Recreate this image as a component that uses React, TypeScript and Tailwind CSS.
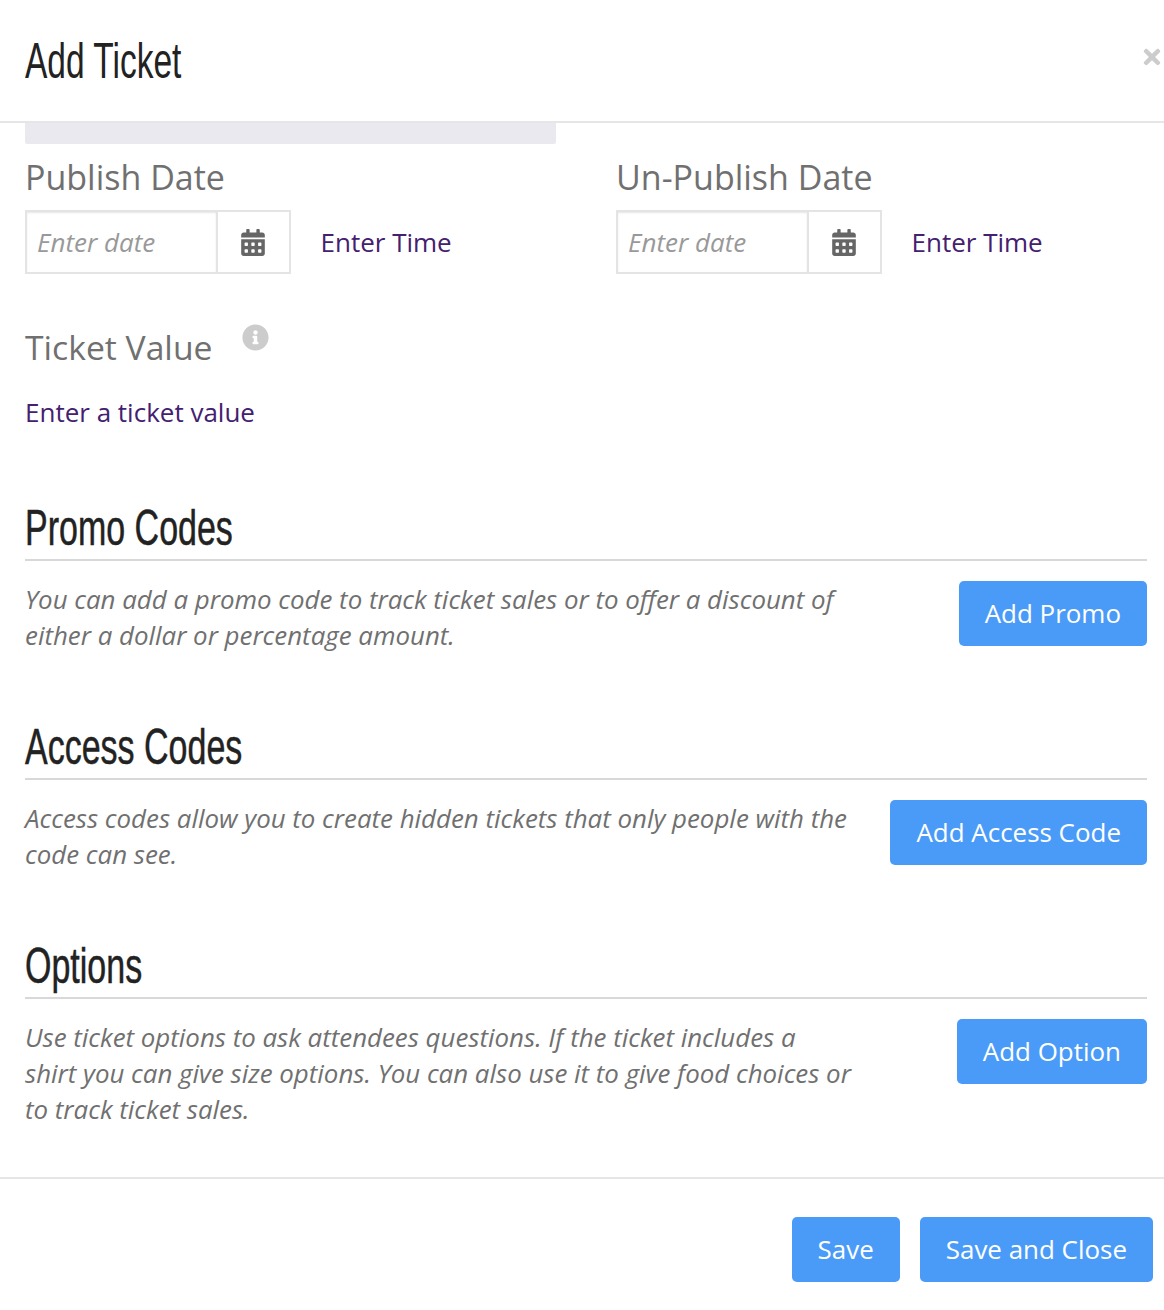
import { FaCalendarAlt, FaInfoCircle, FaTimes } from "react-icons/fa";

const body = "font-['Open_Sans',sans-serif]";
const heading = "font-['Liberation_Sans',sans-serif]";
const blueButton =
  "h-[65px] shrink-0 rounded-[5px] bg-[#4a9bf8] px-[26px] text-[25.95px] text-white";

function DateField({ label }: { label: string }) {
  return (
    <div className="w-[591px] shrink-0">
      <div className="text-[34px] leading-[45px] text-[#707070]">{label}</div>
      <div className="mt-[10px] flex items-center">
        <div className="flex h-[64px] border-2 border-[#e4e4e4]">
          <div className="flex w-[189px] items-center pl-[10px] text-[26px] italic text-[#999999] shadow-[inset_0_1px_2px_rgba(0,0,0,0.1)]">
            Enter date
          </div>
          <div className="flex w-[73px] items-center justify-center border-l-2 border-[#e4e4e4]">
            <FaCalendarAlt className="mr-[2px] h-[27px] w-[24px] text-[#666666]" />
          </div>
        </div>
        <span className="ml-[29.5px] text-[26px] text-[#44206f]">Enter Time</span>
      </div>
    </div>
  );
}

function CodeSection({
  title,
  lines,
  action,
  mt,
}: {
  title: string;
  lines: string[];
  action: string;
  mt: string;
}) {
  return (
    <section className={mt}>
      <h2
        className={`${heading} border-b-2 border-[#d8d8d8] pb-[2px] text-[50px] leading-[58px] text-[#222222]`}
      >
        <span className="inline-block origin-left scale-x-[0.68] [-webkit-text-stroke:0.5px_#222222]">
          {title}
        </span>
      </h2>
      <div className="mt-[20px] flex items-start justify-between">
        <p className="text-[25.86px] leading-[36px] italic text-[#707070]">
          {lines.map((line) => (
            <span key={line} className="block">
              {line}
            </span>
          ))}
        </p>
        <button className={blueButton}>{action}</button>
      </div>
    </section>
  );
}

export default function App() {
  return (
    <div className={`${body} h-[1310px] w-[1164px] overflow-hidden bg-white`}>
      <header className="flex h-[123px] items-center justify-between border-b-2 border-[#e6e6e6] pl-[25px]">
        <h1 className={`${heading} text-[50px] leading-[60px] text-[#222222]`}>
          <span className="inline-block origin-left scale-x-[0.67]">Add Ticket</span>
        </h1>
        <FaTimes className="mt-[-8px] mr-0 h-[24px] w-[24px] text-[#cccccc]" />
      </header>

      <main className="px-[25px] pr-[17px]">
        <div className="h-[21px] w-[531px] rounded-b-[2px] bg-[#ebe9f0]" />

        <div className="mt-[11px] flex">
          <DateField label="Publish Date" />
          <DateField label="Un-Publish Date" />
        </div>

        <div className="mt-[51px] flex items-start">
          <span className="text-[33.7px] leading-[45px] text-[#707070]">Ticket Value</span>
          <FaInfoCircle className="mt-[-1px] ml-[30px] h-[27px] w-[27px] text-[#cccccc]" />
        </div>
        <div className="mt-[24px] text-[26px] leading-[36px] text-[#44206f]">
          Enter a ticket value
        </div>

        <CodeSection
          mt="mt-[69px]"
          title="Promo Codes"
          lines={[
            "You can add a promo code to track ticket sales or to offer a discount of",
            "either a dollar or percentage amount.",
          ]}
          action="Add Promo"
        />
        <CodeSection
          mt="mt-[65px]"
          title="Access Codes"
          lines={[
            "Access codes allow you to create hidden tickets that only people with the",
            "code can see.",
          ]}
          action="Add Access Code"
        />
        <CodeSection
          mt="mt-[65px]"
          title="Options"
          lines={[
            "Use ticket options to ask attendees questions. If the ticket includes a",
            "shirt you can give size options. You can also use it to give food choices or",
            "to track ticket sales.",
          ]}
          action="Add Option"
        />
      </main>

      <footer className="mt-[50px] flex justify-end gap-[20px] border-t-2 border-[#e6e6e6] pt-[38px] pr-[11px]">
        <button className={blueButton}>Save</button>
        <button className={blueButton}>Save and Close</button>
      </footer>
    </div>
  );
}
